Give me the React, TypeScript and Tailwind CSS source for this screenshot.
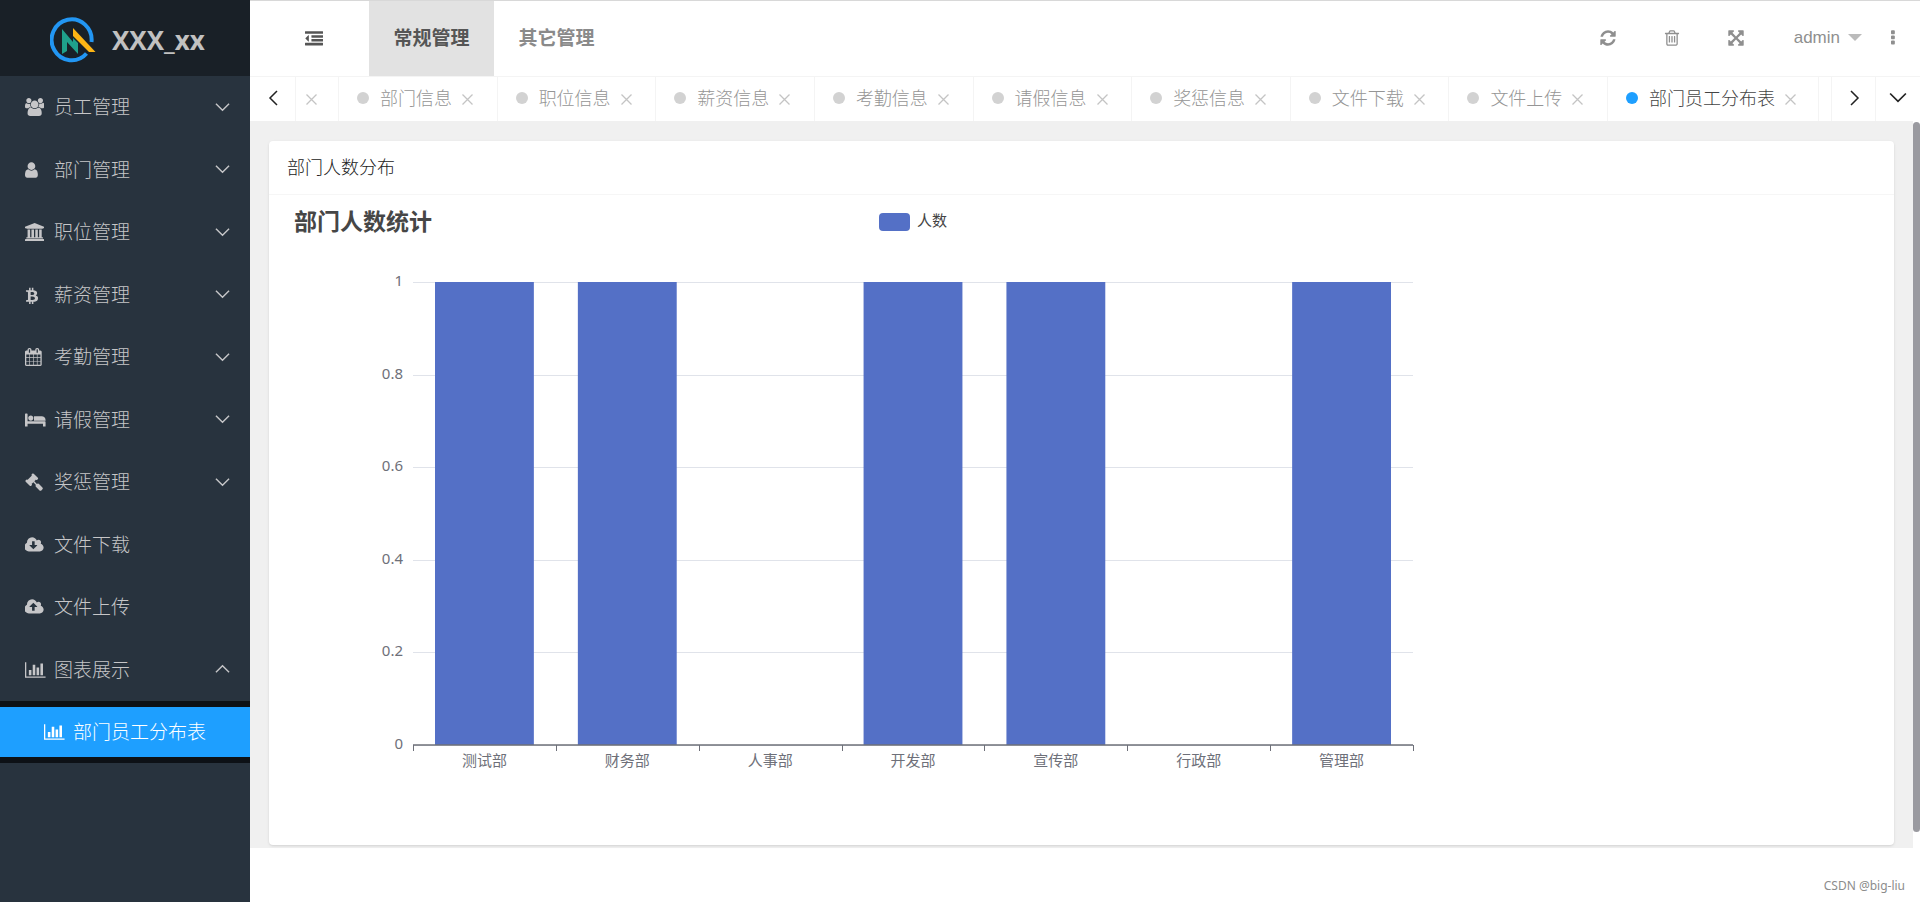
import type { ReactNode } from 'react';

// Font Awesome 4 glyphs: viewBox + path
const glyphs = {
    users: ['0 0 1920 1792', 'M593 896q-162 5-265 128h-134q-82 0-138-40.5t-56-118.5q0-353 124-353 6 0 43.5 21t97.5 42.5 119 21.5q67 0 133-23-5 37-5 66 0 159 93 293zm1071 637q0 120-73 189.5t-194 69.5h-874q-121 0-194-69.5t-73-189.5q0-53 3.5-103.5t14-109 26.5-108.5 43-97.5 62-81 85.5-53.5 111.5-20q10 0 43 21.5t73 48 107 48 135 21.5 135-21.5 107-48 73-48 43-21.5q61 0 111.5 20t85.5 53.5 62 81 43 97.5 26.5 108.5 14 109 3.5 103.5zm-1024-1277q0 106-75 181t-181 75-181-75-75-181 75-181 181-75 181 75 75 181zm704 384q0 159-112.5 271.5t-271.5 112.5-271.5-112.5-112.5-271.5 112.5-271.5 271.5-112.5 271.5 112.5 112.5 271.5zm576 225q0 78-56 118.5t-138 40.5h-134q-103-123-265-128 93-134 93-293 0-29-5-66 66 23 133 23 59 0 119-21.5t97.5-42.5 43.5-21q124 0 124 353zm-128-609q0 106-75 181t-181 75-181-75-75-181 75-181 181-75 181 75 75 181z'],
    user: ['256 0 1280 1792', 'M1536 1399q0 109-62.5 187t-150.5 78h-854q-88 0-150.5-78t-62.5-187q0-85 8.5-160.5t31.5-152 58.5-131 94-89 134.5-34.5q131 128 313 128t313-128q76 0 134.5 34.5t94 89 58.5 131 31.5 152 8.5 160.5zm-256-887q0 159-112.5 271.5t-271.5 112.5-271.5-112.5-112.5-271.5 112.5-271.5 271.5-112.5 271.5 112.5 112.5 271.5z'],
    university: ['0 0 1920 1792', 'M960 0l960 384v128h-128q0 26-20.5 45t-48.5 19h-1526q-28 0-48.5-19t-20.5-45h-128v-128zm-704 640h256v768h128v-768h256v768h128v-768h256v768h128v-768h256v768h59q28 0 48.5 19t20.5 45v64h-1664v-64q0-26 20.5-45t48.5-19h59v-768zm1595 960q28 0 48.5 19t20.5 45v128h-1920v-128q0-26 20.5-45t48.5-19h1782z'],
    btc: ['234 0 1300 1792', 'M1440.5 678q18 182-131 258 117 28 175 103t45 214q-7 71-32.5 125t-64.5 89-97 58.5-121.5 34.5-145.5 15v255h-154v-251q-80 0-122-1v252h-154v-255q-18 0-54-.5t-55-.5h-200l31-183h111q50 0 58-51v-402h16q-6-1-16-1v-287q-13-68-89-68h-111v-164l212 1q64 0 97-1v-252h154v247q82-2 122-2v-245h154v252q79 7 140 22.5t113 45 82.5 78 36.5 114.5zm-215 545q0-36-15-64t-37-46-57.5-30.5-65.5-18.5-74-9-69-3-64.5 1-47.5 1v338q8 0 37 .5t48 .5 53-1.5 58.5-4 57-8.5 55.5-14 47.5-21 39.5-30 24.5-40 9.5-51zm-71-476q0-33-12.5-58.5t-30.5-42-48-28-55-16.5-61.5-8-58-2.5-54 1-39.5.5v307q5 0 34.5.5t46.5 0 50-2 55-5.5 51.5-11 48.5-18.5 37-27 27-38.5 9-51z'],
    calendar: ['64 0 1664 1792', 'M192 1664h288v-288h-288v288zm352 0h320v-288h-320v288zm-352-352h288v-320h-288v320zm352 0h320v-320h-320v320zm-352-384h288v-288h-288v288zm736 736h320v-288h-320v288zm-384-736h320v-288h-320v288zm768 736h288v-288h-288v288zm-384-352h320v-320h-320v320zm-352-864v-288q0-13-9.5-22.5t-22.5-9.5h-64q-13 0-22.5 9.5t-9.5 22.5v288q0 13 9.5 22.5t22.5 9.5h64q13 0 22.5-9.5t9.5-22.5zm736 864h288v-320h-288v320zm-384-384h320v-288h-320v288zm384 0h288v-288h-288v288zm32-480v-288q0-13-9.5-22.5t-22.5-9.5h-64q-13 0-22.5 9.5t-9.5 22.5v288q0 13 9.5 22.5t22.5 9.5h64q13 0 22.5-9.5t9.5-22.5zm384-64v1280q0 52-38 90t-90 38h-1408q-52 0-90-38t-38-90v-1280q0-52 38-90t90-38h128v-96q0-66 47-113t113-47h64q66 0 113 47t47 113v96h384v-96q0-66 47-113t113-47h64q66 0 113 47t47 113v96h128q52 0 90 38t38 90z'],
    bed: ['0 0 2048 1792', 'M256 1024h1728q26 0 45 19t19 45v448h-256v-256h-1536v256h-256v-1216q0-26 19-45t45-19h128q26 0 45 19t19 45v704zm576-320q0-106-75-181t-181-75-181 75-75 181 75 181 181 75 181-75 75-181zm1216 256v-64q0-159-112.5-271.5t-271.5-112.5h-704q-26 0-45 19t-19 45v384h1152z'],
    gavel: ['0 0 1792 1792', 'M1771 1536q0 53-37 90l-107 108q-39 37-91 37-53 0-90-37l-363-364q-38-36-38-90 0-53 43-96l-256-256-126 126q-14 14-34 14t-34-14q2 2 12.5 12t12.5 13 10 11.5 10 13.5 6 13.5 5.5 16.5 1.5 18q0 38-28 68-3 3-16.5 18t-19 20.5-18.5 16.5-22 15.5-22 9-26 4.5q-40 0-68-28l-408-408q-28-28-28-68 0-13 4.5-26t9-22 15.5-22 16.5-18.5 20.5-19 18-16.5q30-28 68-28 10 0 18 1.5t16.5 5.5 13.5 6 13.5 10 11.5 10 13 12.5 12 12.5q-14-14-14-34t14-34l348-348q14-14 34-14t34 14q-2-2-12.5-12t-12.5-13-10-11.5-10-13.5-6-13.5-5.5-16.5-1.5-18q0-38 28-68 3-3 16.5-18t19-20.5 18.5-16.5 22-15.5 22-9 26-4.5q40 0 68 28l408 408q28 28 28 68 0 13-4.5 26t-9 22-15.5 22-16.5 18.5-20.5 19-18 16.5q-30 28-68 28-10 0-18-1.5t-16.5-5.5-13.5-6-13.5-10-11.5-10-13-12.5-12-12.5q14 14 14 34t-14 34l-126 126 256 256q43-43 96-43 52 0 91 37l363 363q37 39 37 91z'],
    cloudDownload: ['0 0 1920 1792', 'M1216 928q0-14-9-23t-23-9h-224v-352q0-13-9.5-22.5t-22.5-9.5h-192q-13 0-22.5 9.5t-9.5 22.5v352h-224q-13 0-22.5 9.5t-9.5 22.5q0 14 9 23l352 352q9 9 23 9t23-9l351-351q10-12 10-24zm640 224q0 159-112.5 271.5t-271.5 112.5h-1088q-185 0-316.5-131.5t-131.5-316.5q0-130 70-240t188-165q-2-30-2-43 0-212 150-362t362-150q156 0 285.5 87t188.5 231q71-62 166-62 106 0 181 75t75 181q0 76-41 138 130 31 213.5 135.5t83.5 238.5z'],
    cloudUpload: ['0 0 1920 1792', 'M1216 864q0-14-9-23l-352-352q-9-9-23-9t-23 9l-351 351q-10 12-10 24 0 14 9 23t23 9h224v352q0 13 9.5 22.5t22.5 9.5h192q13 0 22.5-9.5t9.5-22.5v-352h224q13 0 22.5-9.5t9.5-22.5zm640 288q0 159-112.5 271.5t-271.5 112.5h-1088q-185 0-316.5-131.5t-131.5-316.5q0-130 70-240t188-165q-2-30-2-43 0-212 150-362t362-150q156 0 285.5 87t188.5 231q71-62 166-62 106 0 181 75t75 181q0 76-41 138 130 31 213.5 135.5t83.5 238.5z'],
    barChart: ['0 0 2048 1792', 'M640 896v512h-256v-512h256zm384-512v1024h-256v-1024h256zm1024 1152v128h-2048v-1536h128v1408h1920zm-640-896v768h-256v-768h256zm384-384v1152h-256v-1152h256z'],
    refresh: ['0 0 1792 1792', 'M1639 1056q0 5-1 7-64 268-268 434.5t-478 166.5q-146 0-282.5-55t-243.5-157l-129 129q-19 19-45 19t-45-19-19-45v-448q0-26 19-45t45-19h448q26 0 45 19t19 45-19 45l-137 137q71 66 161 102t187 36q134 0 250-65t186-179q11-17 53-117 8-23 30-23h192q13 0 22.5 9.5t9.5 22.5zm25-800v448q0 26-19 45t-45 19h-448q-26 0-45-19t-19-45 19-45l138-138q-148-137-349-137-134 0-250 65t-186 179q-11 17-53 117-8 23-30 23h-199q-13 0-22.5-9.5t-9.5-22.5v-7q65-268 270-434.5t480-166.5q146 0 284 55.5t245 156.5l130-129q19-19 45-19t45 19 19 45z'],
    trash: ['0 0 1792 1792', 'M704 736v576q0 14-9 23t-23 9h-64q-14 0-23-9t-9-23v-576q0-14 9-23t23-9h64q14 0 23 9t9 23zm256 0v576q0 14-9 23t-23 9h-64q-14 0-23-9t-9-23v-576q0-14 9-23t23-9h64q14 0 23 9t9 23zm256 0v576q0 14-9 23t-23 9h-64q-14 0-23-9t-9-23v-576q0-14 9-23t23-9h64q14 0 23 9t9 23zm128 724v-948h-896v948q0 22 7 40.5t14.5 27 10.5 8.5h832q3 0 10.5-8.5t14.5-27 7-40.5zm-672-1076h448l-48-117q-7-9-17-11h-317q-10 2-17 11zm928 32v64q0 14-9 23t-23 9h-96v948q0 83-47 143.5t-113 60.5h-832q-66 0-113-58.5t-47-141.5v-952h-96q-14 0-23-9t-9-23v-64q0-14 9-23t23-9h309l70-167q15-37 54-63t79-26h320q40 0 79 26t54 63l70 167h309q14 0 23 9t9 23z'],
    arrows: ['0 0 1792 1792', 'M1411 541l-355 355 355 355 144-144q29-31 70-14 39 17 39 59v448q0 26-19 45t-45 19h-448q-42 0-59-40-17-39 14-69l144-144-355-355-355 355 144 144q31 30 14 69-17 40-59 40h-448q-26 0-45-19t-19-45v-448q0-42 40-59 39-17 69 14l144 144 355-355-355-355-144 144q-19 19-45 19-12 0-24-5-40-17-40-59v-448q0-26 19-45t45-19h448q42 0 59 40 17 39-14 69l-144 144 355 355 355-355-144-144q-31-30-14-69 17-40 59-40h448q26 0 45 19t19 45v448q0 42-39 59-13 5-25 5-26 0-45-19z'],
    ellipsis: ['704 0 384 1792', 'M1088 1248v192q0 40-28 68t-68 28h-192q-40 0-68-28t-28-68v-192q0-40 28-68t68-28h192q40 0 68 28t28 68zm0-512v192q0 40-28 68t-68 28h-192q-40 0-68-28t-28-68v-192q0-40 28-68t68-28h192q40 0 68 28t28 68zm0-512v192q0 40-28 68t-68 28h-192q-40 0-68-28t-28-68v-192q0-40 28-68t68-28h192q40 0 68 28t28 68z'],
    outdent: ['0 0 1792 1792', 'M384 544v576q0 13-9.5 22.5t-22.5 9.5q-14 0-23-9l-288-288q-9-9-9-23t9-23l288-288q9-9 23-9 13 0 22.5 9.5t9.5 22.5zm1408 768v192q0 13-9.5 22.5t-22.5 9.5h-1728q-13 0-22.5-9.5t-9.5-22.5v-192q0-13 9.5-22.5t22.5-9.5h1728q13 0 22.5 9.5t9.5 22.5zm0-384v192q0 13-9.5 22.5t-22.5 9.5h-1088q-13 0-22.5-9.5t-9.5-22.5v-192q0-13 9.5-22.5t22.5-9.5h1088q13 0 22.5 9.5t9.5 22.5zm0-384v192q0 13-9.5 22.5t-22.5 9.5h-1088q-13 0-22.5-9.5t-9.5-22.5v-192q0-13 9.5-22.5t22.5-9.5h1088q13 0 22.5 9.5t9.5 22.5zm0-384v192q0 13-9.5 22.5t-22.5 9.5h-1728q-13 0-22.5-9.5t-9.5-22.5v-192q0-13 9.5-22.5t22.5-9.5h1728q13 0 22.5 9.5t9.5 22.5z'],
};

type GlyphName = keyof typeof glyphs;

function Glyph({ name }: { name: GlyphName }) {
    const [viewBox, d] = glyphs[name];
    return (
        <svg viewBox={viewBox} className="h-[18px] w-auto fill-current" aria-hidden="true">
            <path d={d} />
        </svg>
    );
}

function Chevron({ dir, size = 16 }: { dir: 'up' | 'down' | 'left' | 'right'; size?: number }) {
    const d = {
        up: 'M1 11l7-7 7 7',
        down: 'M1 4l7 7 7-7',
        left: 'M12 1l-7 7 7 7',
        right: 'M5 1l7 7-7 7',
    }[dir];
    return (
        <svg width={size} height={size} viewBox="0 0 16 16" fill="none" stroke="currentColor" strokeWidth="1.5" aria-hidden="true">
            <path d={d} />
        </svg>
    );
}

function Logo() {
    return (
        <svg width="48" height="46" viewBox="0 0 48 46" fill="none" aria-hidden="true">
            <path d="M36.5 36.5A20 20.5 0 1 1 41.5 25" stroke="#2296f3" strokeWidth="4" />
            <path d="M12 12l11 13v-4l5 5v11L17 25v9l-5 3z" fill="#1fa08b" />
            <path d="M23 11l22.500 24h-6.500L23 19z" fill="#fdb515" />
        </svg>
    );
}

const menu: { label: string; icon: GlyphName; arrow?: 'up' | 'down' }[] = [
    { label: '员工管理', icon: 'users', arrow: 'down' },
    { label: '部门管理', icon: 'user', arrow: 'down' },
    { label: '职位管理', icon: 'university', arrow: 'down' },
    { label: '薪资管理', icon: 'btc', arrow: 'down' },
    { label: '考勤管理', icon: 'calendar', arrow: 'down' },
    { label: '请假管理', icon: 'bed', arrow: 'down' },
    { label: '奖惩管理', icon: 'gavel', arrow: 'down' },
    { label: '文件下载', icon: 'cloudDownload' },
    { label: '文件上传', icon: 'cloudUpload' },
    { label: '图表展示', icon: 'barChart', arrow: 'up' },
];

function Sidebar() {
    return (
        <aside className="w-[250px] shrink-0 bg-[#28333e] text-[#c6c6c8]">
            <h1 className="h-[76px] bg-[#192027] pl-[50px] pt-1 flex items-center gap-[14px] text-[26px] font-bold font-['Open_Sans',sans-serif] text-[#c1c1c1]">
                <Logo />
                XXX_xx
            </h1>
            <nav>
                <ul className="h-[625px] grid auto-rows-fr">
                    {menu.map((item) => (
                        <li key={item.label} className="flex">
                            <a href="#" className="flex-1 flex items-center pl-[25px] pr-5 text-[19px] font-light">
                                <span className="w-[29px]"><Glyph name={item.icon} /></span>
                                <span className="flex-1">{item.label}</span>
                                {item.arrow && <Chevron dir={item.arrow} size={15} />}
                            </a>
                        </li>
                    ))}
                </ul>
                <div className="bg-[#0d1116] py-[6px]">
                    <a href="#" className="h-[50px] bg-[#1e9fff] text-white pl-11 flex items-center text-[19px] font-light">
                        <span className="w-[29px]"><Glyph name="barChart" /></span>
                        部门员工分布表
                    </a>
                </div>
            </nav>
        </aside>
    );
}

function IconButton({ label, children }: { label: string; children: ReactNode }) {
    return (
        <button type="button" aria-label={label} className="w-16 h-full flex items-center justify-center">
            {children}
        </button>
    );
}

function Header() {
    return (
        <header className="h-[76px] border-t border-t-[#d8d8d8] flex items-stretch text-[#8f8f8f]">
            <button type="button" aria-label="收起菜单" className="w-[119px] pl-2 flex items-center justify-center text-[#555]">
                <Glyph name="outdent" />
            </button>
            <nav className="flex text-[19px] font-bold">
                <a href="#" className="w-[125px] flex items-center justify-center bg-[#e2e2e2] text-[#555]">常规管理</a>
                <a href="#" className="w-[125px] flex items-center justify-center text-[#8a8a8a]">其它管理</a>
            </nav>
            <div className="ml-auto flex items-center pb-[2px]">
                <IconButton label="刷新"><Glyph name="refresh" /></IconButton>
                <IconButton label="清理"><Glyph name="trash" /></IconButton>
                <IconButton label="全屏"><Glyph name="arrows" /></IconButton>
                <button type="button" className="h-full pl-[26px] pr-1 flex items-center gap-2 text-[17px] font-['Liberation_Sans',sans-serif]">
                    admin
                    <svg width="14" height="7" viewBox="0 0 14 7" fill="#bbb" aria-hidden="true">
                        <path d="M0 0h14l-7 7z" />
                    </svg>
                </button>
                <button type="button" aria-label="更多" className="w-[54px] h-full flex items-center justify-center">
                    <Glyph name="ellipsis" />
                </button>
            </div>
        </header>
    );
}

function CloseButton({ label }: { label: string }) {
    return (
        <button type="button" aria-label={`关闭${label}`} className="ml-[10px] pt-1">
            <svg width="11" height="11" viewBox="0 0 11 11" stroke="#c4c4c4" strokeWidth="1.3" aria-hidden="true">
                <path d="M.5.5l10 10M10.500.5l-10 10" />
            </svg>
        </button>
    );
}

const tabs = ['部门信息', '职位信息', '薪资信息', '考勤信息', '请假信息', '奖惩信息', '文件下载', '文件上传', '部门员工分布表'];

function TabBar() {
    return (
        <div className="h-[45px] border-t border-[#f4f4f4] flex text-lg font-light">
            <button type="button" aria-label="向左" className="w-[46px] pb-[2px] border-r border-[#f4f4f4] flex items-center justify-center text-[#222]">
                <Chevron dir="left" />
            </button>
            <ul className="flex-1 grid grid-cols-[43px_repeat(8,minmax(0,1fr))_211px] mr-3">
                <li className="pb-[3px] border-r border-[#f4f4f4] flex items-center">
                    <CloseButton label="员工信息" />
                </li>
                {tabs.map((tab, i) => {
                    const active = i === tabs.length - 1;
                    return (
                        <li key={tab} className="pb-[3px] border-r border-[#f4f4f4] pl-[18px] flex items-center whitespace-nowrap">
                            <a href="#" className={`flex items-center gap-[11px] ${active ? 'text-[#444]' : 'text-[#959595]'}`}>
                                <span className={`size-3 rounded-full ${active ? 'bg-[#1e9fff]' : 'bg-[#d2d2d2]'}`} />
                                {tab}
                            </a>
                            <CloseButton label={tab} />
                        </li>
                    );
                })}
            </ul>
            <button type="button" aria-label="向右" className="w-11 pb-[2px] border-l border-[#f4f4f4] flex items-center justify-center text-[#222]">
                <Chevron dir="right" />
            </button>
            <button type="button" aria-label="标签操作" className="w-[45px] pb-[2px] border-l border-[#f4f4f4] flex items-center justify-center text-[#222]">
                <Chevron dir="down" size={18} />
            </button>
        </div>
    );
}

const departments = [
    { name: '测试部', count: 1 },
    { name: '财务部', count: 1 },
    { name: '人事部', count: 0 },
    { name: '开发部', count: 1 },
    { name: '宣传部', count: 1 },
    { name: '行政部', count: 0 },
    { name: '管理部', count: 1 },
];

const plot = { left: 125, right: 1125, top: 83, bottom: 546 };
const ticks = [0, 0.2, 0.4, 0.6, 0.8, 1];

function BarChart() {
    const band = (plot.right - plot.left) / departments.length;
    const y = (v: number) => Math.round(plot.bottom - v * (plot.bottom - plot.top));

    return (
        <svg width="1250" height="621" viewBox="0 0 1250 621" role="img" aria-label="部门人数统计" className="max-w-full" fontSize="15" fill="#6e7079">
            <text x="6" y="31" fontSize="23" fontWeight="bold" fill="#464646">部门人数统计</text>
            <rect x="591" y="14" width="31" height="18" rx="4" fill="#5470c6" />
            <text x="629" y="27" fill="#444">人数</text>

            {ticks.map((v) => (
                <g key={v}>
                    <path d={`M${plot.left} ${y(v) + 0.5}H${plot.right}`} stroke="#e0e3ea" />
                    <text x="115" y={y(v) + 4} textAnchor="end">{v}</text>
                </g>
            ))}

            {departments.map((dep, i) => (
                <g key={dep.name}>
                    {dep.count > 0 && (
                        <rect x={plot.left + band * i + 22} y={y(dep.count)} width={band - 44} height={plot.bottom - y(dep.count)} fill="#5470c6" />
                    )}
                    <text x={plot.left + band * (i + 0.5)} y={plot.bottom + 21} textAnchor="middle">{dep.name}</text>
                </g>
            ))}

            {/* x axis */}
            <path d={`M${plot.left} ${plot.bottom}H${plot.right}`} stroke="#6e7079" strokeWidth="1.500" />
            {[...departments, null].map((_, i) => (
                <path key={i} d={`M${Math.round(plot.left + band * i) + 0.5} ${plot.bottom}v6`} stroke="#6e7079" />
            ))}
        </svg>
    );
}

export default function App() {
    return (
        <div className="min-h-screen flex bg-white font-['Noto_Sans','Noto_Sans_CJK_SC',sans-serif]">
            <Sidebar />
            <div className="flex-1 min-w-0 flex flex-col">
                <Header />
                <TabBar />
                <main className="flex">
                    <div className="flex-1 min-w-0 bg-[#f0f0f0] pt-5 px-[19px] pb-[3px]">
                        <section className="bg-white rounded-sm shadow-sm">
                            <h2 className="h-[54px] px-[18px] pb-[2px] border-b border-[#f6f6f6] flex items-center text-lg font-light text-[#222]">
                                部门人数分布
                            </h2>
                            <div className="pt-1 pb-[25px] px-[19px]">
                                <BarChart />
                            </div>
                        </section>
                    </div>
                    {/* scrollbar */}
                    <div className="w-[7px] pt-px pb-4 flex">
                        <div className="flex-1 rounded-full bg-[#9a9aa0]" />
                    </div>
                </main>
                <footer className="mt-auto px-[15px] pb-[6px] text-right text-xs leading-5 text-[#8c8c8c]">
                    CSDN @big-liu
                </footer>
            </div>
        </div>
    );
}
